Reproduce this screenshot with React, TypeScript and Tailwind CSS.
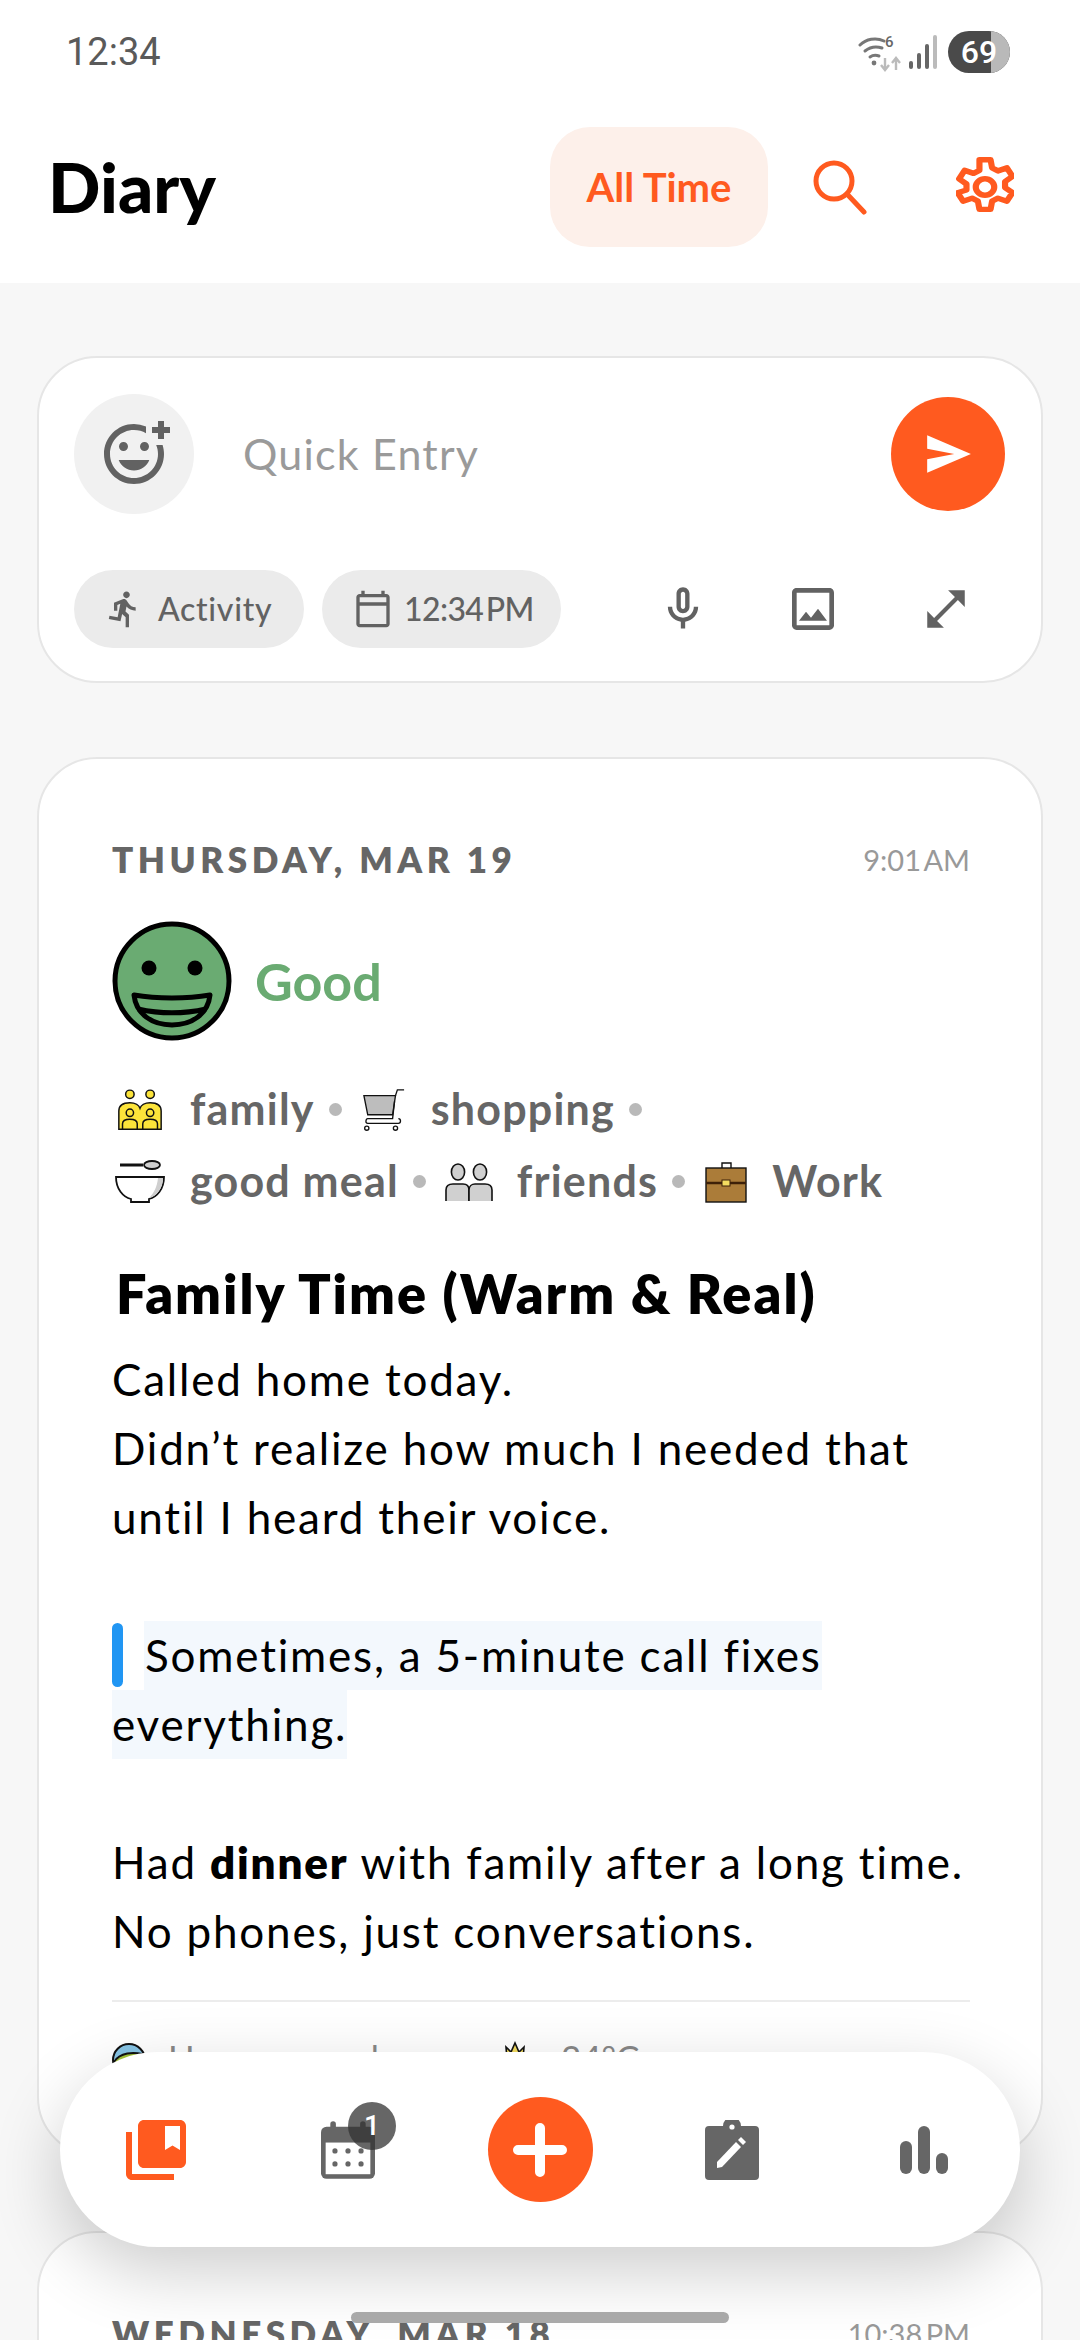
import type { ReactNode } from 'react';
import {
  MdOutlineAddReaction,
  MdDirectionsRun,
  MdOutlineCalendarToday,
  MdOutlineMicNone,
  MdOutlineImage,
  MdOpenInFull,
  MdCollectionsBookmark,
} from 'react-icons/md';

const FONT = "font-['Lato','Noto_Sans',sans-serif]";

function StatusBar() {
  return (
    <div className="flex h-[104px] items-center justify-between pl-[66px] pr-[70px]">
      <span className="font-['Roboto',sans-serif] text-[38px] text-[#5a5a5a]">12:34</span>
      <div className="flex items-center gap-[10px]">
        <svg className="mr-[-6px]" width="46" height="40" viewBox="0 0 46 40" fill="none">
          <path d="M2 13C8 7 18 5 26 9" stroke="#777" strokeWidth="3" strokeLinecap="round" />
          <path d="M7 19C12 15 18 14 24 16" stroke="#777" strokeWidth="3" strokeLinecap="round" />
          <path d="M12 25C15 23 18 23 21 24" stroke="#777" strokeWidth="3" strokeLinecap="round" />
          <circle cx="16" cy="31" r="2.4" fill="#777" />
          <text x="27" y="15" fontSize="15" fontFamily="Roboto" fontWeight="500" fill="#666">6</text>
          <path d="M27 26V38M23 33L27 38L31 33" stroke="#bbb" strokeWidth="2.4" />
          <path d="M38 38V26M34 31L38 26L42 31" stroke="#bbb" strokeWidth="2.4" />
        </svg>
        <svg width="30" height="38" viewBox="0 0 30 38">
          <rect x="1" y="28" width="4" height="8" rx="2" fill="#666" />
          <rect x="9" y="20" width="4" height="16" rx="2" fill="#666" />
          <rect x="17" y="11" width="4" height="25" rx="2" fill="#666" />
          <rect x="25" y="2" width="4" height="34" rx="2" fill="#bbb" />
        </svg>
        <div className="relative flex h-[42px] w-[62px] items-center justify-center overflow-hidden rounded-full bg-[#4a4a4a] font-['Roboto',sans-serif] text-[32px] font-medium text-white">
          <div className="absolute inset-y-0 right-0 w-[19px] bg-[#b9b9b9]" />
          <span className="relative">69</span>
        </div>
      </div>
    </div>
  );
}

function Header() {
  return (
    <header className="h-[283px] bg-white">
      <StatusBar />
      <div className="flex items-start justify-between pl-[48px] pr-[66px] pt-[23px]">
        <h1 className="pt-[20px] text-[69px] leading-[80px] font-black text-black">Diary</h1>
        <div className="flex items-center">
          <div className="flex h-[120px] w-[218px] items-center justify-center rounded-[40px] bg-[#fdf0ea] text-[40px] font-bold text-[#ff5a1f]">
            All Time
          </div>
          <svg className="ml-[44px]" width="56" height="56" viewBox="0 0 56 56" fill="none" stroke="#ff5a1f" strokeWidth="5" strokeLinecap="round">
            <circle cx="22" cy="22" r="18" />
            <path d="M35 35L52 53" />
          </svg>
          <svg className="ml-[88px]" width="58" height="60" viewBox="2.6 1 18.8 22" preserveAspectRatio="none" fill="none" stroke="#ff5a1f" strokeWidth="2" strokeLinejoin="round">
            <path d="M10.2 2h3.6l.5 3 1.9 1.1 2.9-1.1 1.8 3.1-2.4 1.9v2.2l2.4 1.9-1.8 3.1-2.9-1.1-1.9 1.1-.5 3h-3.6l-.5-3-1.9-1.1-2.9 1.1-1.8-3.1L6 13.1v-2.2L3.6 9l1.8-3.1 2.9 1.1 1.9-1.1z" />
            <circle cx="12" cy="12" r="3" />
          </svg>
        </div>
      </div>
    </header>
  );
}

function QuickEntry() {
  return (
    <section className="mx-[37px] mt-[73px] h-[327px] rounded-[60px] border-2 border-[#e6e6e6] bg-white pl-[35px] pr-[36px] pt-[36px]">
      <div className="flex items-center">
        <div className="flex h-[120px] w-[120px] items-center justify-center rounded-full bg-[#f1f1f1]">
          <MdOutlineAddReaction className="h-[72px] w-[72px] text-[#626262]" />
        </div>
        <span className="ml-[49px] flex-1 text-[43px] tracking-[1.2px] text-[#9a9a9a]">Quick Entry</span>
        <div className="flex h-[114px] w-[114px] items-center justify-center rounded-full bg-[#ff5a1f]">
          <svg width="50" height="50" viewBox="0 0 24 24" fill="white">
            <path d="M2 3L23 12L2 21V14.5L15 12L2 9.5Z" />
          </svg>
        </div>
      </div>
      <div className="mt-[56px] flex items-center text-[#626262]">
        <div className="flex h-[78px] w-[230px] items-center rounded-full bg-[#ebebeb] pl-[30px]">
          <MdDirectionsRun className="h-[40px] w-[40px]" />
          <span className="ml-[14px] text-[32px] font-medium tracking-[0.7px]">Activity</span>
        </div>
        <div className="ml-[18px] flex h-[78px] w-[239px] items-center rounded-full bg-[#ebebeb] pl-[31px]">
          <MdOutlineCalendarToday className="h-[40px] w-[40px]" />
          <span className="ml-[11px] text-[32px] font-medium tracking-[-0.6px] [word-spacing:-5px]">12:34 PM</span>
        </div>
        <MdOutlineMicNone className="ml-[96px] h-[52px] w-[52px]" />
        <MdOutlineImage className="ml-[76px] h-[56px] w-[56px]" />
        <MdOpenInFull className="ml-[80px] h-[50px] w-[50px]" />
      </div>
    </section>
  );
}

function MoodFace() {
  return (
    <svg width="120" height="120" viewBox="0 0 120 120">
      <circle cx="60" cy="60" r="57" fill="#6aab72" stroke="#000" strokeWidth="5" />
      <circle cx="37" cy="47" r="7.5" fill="#000" />
      <circle cx="83" cy="47" r="7.5" fill="#000" />
      <path d="M22 74C45 78 75 78 98 74C96 93 80 104 60 104C40 104 24 93 22 74Z" fill="#6aab72" stroke="#000" strokeWidth="5" strokeLinejoin="round" />
      <path d="M26 88C48 93 72 93 94 88" fill="none" stroke="#000" strokeWidth="5" />
    </svg>
  );
}

function FamilyIcon() {
  return (
    <svg width="46" height="44" viewBox="0 0 50 46" stroke="#111" strokeWidth="1.6">
      <circle cx="14" cy="6" r="4.6" fill="#fce43a" />
      <circle cx="36" cy="6" r="4.6" fill="#fce43a" />
      <path d="M2 44V24C2 18 6 15 14 15C20 15 24 18 25 21C26 18 30 15 36 15C44 15 48 18 48 24V44Z" fill="#fce43a" />
      <circle cx="14" cy="26" r="4" fill="#fce43a" />
      <circle cx="36" cy="26" r="4" fill="#fce43a" />
      <path d="M6 44V38C6 35 9 33 14 33C19 33 22 35 22 38V44M28 44V38C28 35 31 33 36 33C41 33 44 35 44 38V44" fill="none" />
    </svg>
  );
}

function CartIcon() {
  return (
    <svg width="44" height="44" viewBox="0 0 46 46" fill="none" stroke="#111" strokeWidth="1.4">
      <path d="M2 8H35L32 28H6Z" fill="#bdbdbd" />
      <path d="M35 8L37 2H44M34 14L32 32H6C4 32 3 37 6 37H38C41 37 41 32 38 32" />
      <circle cx="5" cy="42" r="2.2" />
      <circle cx="35" cy="42" r="2.2" />
    </svg>
  );
}

function BowlIcon() {
  return (
    <svg width="50" height="44" viewBox="0 0 50 44" stroke="#111" strokeWidth="1.8">
      <path d="M5 5H28" fill="none" strokeWidth="3" />
      <ellipse cx="37" cy="5" rx="8" ry="4" fill="#cfcfcf" />
      <path d="M1 17H49C49 29 42 37 34 39V42H16V39C8 37 1 29 1 17Z" fill="#fff" />
      <path d="M43 18H48C48 28 42 36 34 38C39 33 42 27 43 18Z" fill="#cfcfcf" stroke="none" />
    </svg>
  );
}

function FriendsIcon() {
  return (
    <svg width="48" height="38" viewBox="0 0 48 38" fill="#d0d0d0" stroke="#111" strokeWidth="1.6">
      <ellipse cx="13" cy="9" rx="6.6" ry="8" />
      <ellipse cx="35" cy="9" rx="6.6" ry="8" />
      <path d="M1 38V27C1 23 4 21 8 21H18C22 21 24 23 24 27V38" />
      <path d="M24 38V27C24 23 27 21 30 21H40C44 21 47 23 47 27V38" />
    </svg>
  );
}

function BriefcaseIcon() {
  return (
    <svg width="42" height="42" viewBox="0 0 42 42" stroke="#111" strokeWidth="1.4">
      <path d="M17 7V2H26V7" fill="none" />
      <rect x="1" y="7" width="40" height="34" fill="#ab7c39" />
      <path d="M1 22H41" stroke="#3d2008" strokeWidth="2.4" />
      <rect x="17" y="19" width="8" height="6" fill="#f3dc60" stroke="#3d2008" strokeWidth="1" />
    </svg>
  );
}

function Tag({ icon, label, box, dot = true }: { icon: ReactNode; label: string; box: number; dot?: boolean }) {
  return (
    <div className="flex items-center">
      <div className="flex items-center justify-center" style={{ width: box }}>
        {icon}
      </div>
      <span className="ml-[24px] text-[43px] font-bold tracking-[1.2px] text-[#666]">{label}</span>
      {dot && <span className="ml-[14px] mr-[19px] h-[13px] w-[13px] rounded-full bg-[#b9b9b9]" />}
    </div>
  );
}

function EntryHeader({ date, time }: { date: string; time: string }) {
  return (
    <div className="flex items-center justify-between">
      <span className="text-[35px] font-extrabold tracking-[4.5px] text-[#666]">{date}</span>
      <span className="text-[29px] text-[#999] [word-spacing:-4px]">{time}</span>
    </div>
  );
}

function EntryCard() {
  return (
    <section className="mx-[37px] mt-[74px] h-[1400px] rounded-[60px] border-2 border-[#e6e6e6] bg-white pl-[73px] pr-[71px] pt-[74px]">
      <EntryHeader date="THURSDAY, MAR 19" time="9:01 AM" />
      <div className="mt-[35px] flex items-center">
        <MoodFace />
        <span className="ml-[23px] text-[52px] font-bold text-[#6aab72]">Good</span>
      </div>
      <div className="mt-[33px] flex h-[72px] items-center pl-[2px]">
        <Tag icon={<FamilyIcon />} label="family" box={52} />
        <Tag icon={<CartIcon />} label="shopping" box={46} />
      </div>
      <div className="flex h-[72px] items-center pl-[2px]">
        <Tag icon={<BowlIcon />} label="good meal" box={52} />
        <Tag icon={<FriendsIcon />} label="friends" box={48} />
        <Tag icon={<BriefcaseIcon />} label="Work" box={44} dot={false} />
      </div>
      <h2 className="mt-[43px] pl-[4px] text-[54px] leading-[66px] font-extrabold tracking-[2px] text-black">Family Time (Warm &amp; Real)</h2>
      <div className="mt-[18px] text-[44px] leading-[69px] tracking-[1.8px] text-black">
        <p>Called home today.</p>
        <p>Didn’t realize how much I needed that</p>
        <p>until I heard their voice.</p>
        <div className="mt-[69px] flex h-[69px] items-center">
          <span className="h-[64px] w-[11px] rounded-full bg-[#2196f3]" />
          <p className="ml-[21px] bg-[#f3f8fd] pl-[1px]">Sometimes, a 5-minute call fixes</p>
        </div>
        <p className="w-fit bg-[#f3f8fd]">everything.</p>
        <p className="mt-[69px]">
          Had <b className="font-extrabold">dinner</b> with family after a long time.
        </p>
        <p>No phones, just conversations.</p>
      </div>
      <div className="mt-[34px] h-[2px] bg-[#ececec]" />
      <div className="mt-[35px] flex items-start text-[35px] leading-[40px] text-[#888]">
        <svg className="mt-[3px]" width="34" height="40" viewBox="0 0 34 40" stroke="#111" strokeWidth="2">
          <circle cx="17" cy="20" r="16" fill="#87c5e6" />
          <path d="M2 22C8 12 22 12 30 14C28 30 14 36 4 30Z" fill="#a3c43a" />
        </svg>
        <span className="ml-[22px]">Home ground</span>
        <svg className="ml-[126px] mt-[4px]" width="20" height="20" viewBox="0 0 20 20" fill="#f3dc60" stroke="#111" strokeWidth="1.6">
          <path d="M2 18L1 6L6 11L10 2L14 11L19 6L18 18Z" />
        </svg>
        <span className="ml-[36px]">24°C</span>
      </div>
    </section>
  );
}

function NextCard() {
  return (
    <section className="mx-[37px] mt-[74px] h-[400px] rounded-[60px] border-2 border-[#e6e6e6] bg-white pl-[73px] pr-[71px] pt-[74px]">
      <EntryHeader date="WEDNESDAY, MAR 18" time="10:38 PM" />
    </section>
  );
}

function BottomNav() {
  return (
    <nav className="absolute left-[60px] top-[2052px] grid h-[195px] w-[960px] grid-cols-5 items-center justify-items-center rounded-[98px] bg-white shadow-[0_24px_70px_rgba(0,0,0,0.2)]">
      <MdCollectionsBookmark className="h-[72px] w-[72px] text-[#ff5a1f]" />
      <div className="relative">
        <svg width="54" height="60" viewBox="0 0 58 62" className="block">
          <rect x="10" y="0" width="6" height="14" rx="3" fill="#666" />
          <rect x="42" y="0" width="6" height="14" rx="3" fill="#666" />
          <path d="M6 6H52A6 6 0 0 1 58 12V56A6 6 0 0 1 52 62H6A6 6 0 0 1 0 56V12A6 6 0 0 1 6 6Z" fill="#666" />
          <rect x="5" y="23" width="48" height="34" fill="#fff" />
          <g fill="#666">
            <circle cx="15" cy="32" r="2.8" />
            <circle cx="29" cy="32" r="2.8" />
            <circle cx="43" cy="32" r="2.8" />
            <circle cx="15" cy="46" r="2.8" />
            <circle cx="29" cy="46" r="2.8" />
            <circle cx="43" cy="46" r="2.8" />
          </g>
        </svg>
        <span className="absolute left-[27px] top-[-18px] flex h-[48px] w-[48px] items-center justify-center rounded-full bg-[#333]/75 font-['Roboto',sans-serif] text-[28px] font-medium text-white">
          1
        </span>
      </div>
      <div className="flex h-[105px] w-[105px] items-center justify-center rounded-full bg-[#ff5a1f]">
        <svg width="54" height="54" viewBox="0 0 54 54" stroke="white" strokeWidth="10" strokeLinecap="round">
          <path d="M27 5V49M5 27H49" />
        </svg>
      </div>
      <svg width="54" height="60" viewBox="0 0 54 60">
        <path d="M4 6H18A9 9 0 0 1 36 6H50A4 4 0 0 1 54 10V56A4 4 0 0 1 50 60H4A4 4 0 0 1 0 56V10A4 4 0 0 1 4 6Z" fill="#666" />
        <circle cx="27" cy="7" r="2.6" fill="#fff" />
        <path d="M12 42L31 22L36 27L17 47L12 48Z" fill="#fff" />
        <path d="M33 20L36 17L41 22L38 25Z" fill="#fff" />
      </svg>
      <svg width="48" height="48" viewBox="0 0 48 48" fill="#666">
        <rect x="0" y="15" width="12" height="33" rx="6" />
        <rect x="18" y="0" width="12" height="48" rx="6" />
        <rect x="36" y="27" width="12" height="21" rx="6" />
      </svg>
    </nav>
  );
}

export default function App() {
  return (
    <div className={`relative h-[2340px] w-[1080px] overflow-hidden bg-[#f7f7f7] ${FONT}`}>
      <Header />
      <QuickEntry />
      <EntryCard />
      <NextCard />
      <BottomNav />
      <div className="absolute left-[351px] top-[2312px] h-[11px] w-[378px] rounded-full bg-[#a9a9a9]" />
    </div>
  );
}
